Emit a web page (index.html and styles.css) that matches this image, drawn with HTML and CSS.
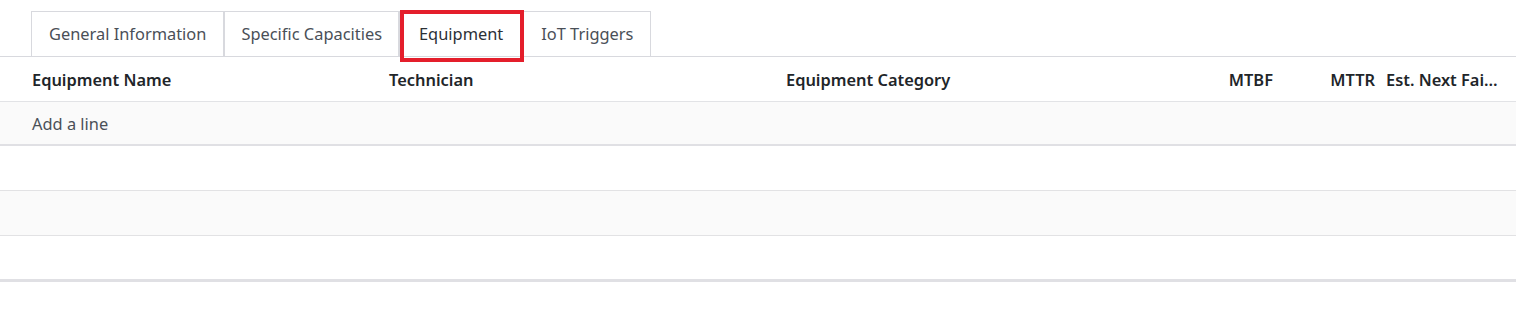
FILE: index.html
```html
<!DOCTYPE html>
<html>
<head>
<title>Work Center - Equipment</title>
<link rel="stylesheet" href="styles.css">
</head>
<body>
  <div id="notebook">
    <ul class="tabs">
      <li class="tab">General Information</li>
      <li class="tab tight">Specific Capacities</li>
      <li class="tab active">Equipment<span class="mark"></span></li>
      <li class="tab">IoT Triggers</li>
    </ul>
    <table class="list">
      <colgroup>
        <col class="col_name">
        <col class="col_tech">
        <col class="col_cat">
        <col class="col_mtbf">
        <col class="col_mttr">
        <col class="col_next">
      </colgroup>
      <thead>
        <tr>
          <th class="first">Equipment Name</th>
          <th>Technician</th>
          <th>Equipment Category</th>
          <th class="num">MTBF</th>
          <th class="num">MTTR</th>
          <th class="clip">Est. Next Failure Date</th>
        </tr>
      </thead>
      <tbody>
        <tr class="add_row">
          <td class="first" colspan="6"><a>Add a line</a></td>
        </tr>
        <tr class="empty"><td colspan="6"></td></tr>
        <tr class="empty odd"><td colspan="6"></td></tr>
        <tr class="empty last"><td colspan="6"></td></tr>
      </tbody>
    </table>
  </div>
</body>
</html>
```

FILE: styles.css
```css
body {
  margin: 0;
  background-color: #ffffff;
  font-family: "Noto Sans", "Open Sans", sans-serif;
  font-size: 16.4px;
  color: #495057;
}
#notebook {
  padding-top: 11px;
}
.tabs {
  display: flex;
  list-style: none;
  margin: 0;
  padding: 0 0 0 31px;
  border-bottom: 1px solid #d8d9de;
}
.tab {
  height: 44px;
  line-height: 44px;
  padding: 0 17px;
  border: 1px solid #d8d9de;
  border-bottom: none;
  color: #4a4f57;
  background-color: #ffffff;
}
.tab.tight {
  padding: 0 16px;
}
.tab.active {
  position: relative;
  padding: 0 19px;
  color: #2b3036;
}
/* red highlight box drawn over the active tab */
.mark {
  position: absolute;
  left: 0;
  top: -2px;
  right: -2px;
  bottom: -6px;
  border: 4px solid #e41e2b;
}
.list {
  width: 100%;
  border-collapse: collapse;
  table-layout: fixed;
}
.col_name { width: 383px; }
.col_tech { width: 397px; }
.col_cat { width: 398px; }
.col_mtbf { width: 101px; }
.col_mttr { width: 102px; }
.list th {
  height: 44px;
  padding: 0 6px;
  text-align: left;
  font-weight: 600;
  color: #212529;
  border-bottom: 1px solid #e2e3e6;
  white-space: nowrap;
}
.list th.first, .list td.first {
  padding-left: 32px;
}
.list th.num {
  text-align: right;
}
.list th.clip {
  overflow: hidden;
  text-overflow: ellipsis;
  padding-left: 5px;
  padding-right: 16px;
}
.list td {
  height: 44px;
  padding: 0 6px;
  border-bottom: 1px solid #e2e2e4;
}
.add_row td {
  background-color: #fafafa;
  height: 42px;
  border-bottom: 2px solid #e0e0e4;
}
.add_row a {
  color: #4a5058;
  cursor: pointer;
}
.empty.odd td {
  background-color: #fafafa;
}
.empty.last td {
  height: 43px;
  border-bottom: 3px solid #e0e0e4;
}
```
